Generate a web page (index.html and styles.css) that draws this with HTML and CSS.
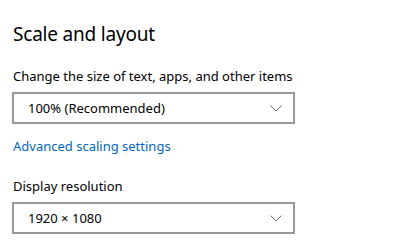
FILE: index.html
```html
<!DOCTYPE html>
<html>
<head>
<meta charset="utf-8">
<link rel="stylesheet" href="styles.css">
</head>
<body>
<main class="page">
  <h1 class="title">Scale and layout</h1>
  <div class="label label-first">Change the size of text, apps, and other items</div>
  <div class="select">
    <span class="select-text">100% (Recommended)</span>
    <svg class="chevron" width="12" height="7" viewBox="0 0 12 7"><path d="M0.5 0.5 L6 6 L11.5 0.5" fill="none" stroke="#6b6b6b" stroke-width="1"/></svg>
  </div>
  <a class="link" href="#">Advanced scaling settings</a>
  <div class="label label-second">Display resolution</div>
  <div class="select">
    <span class="select-text">1920 × 1080</span>
    <svg class="chevron" width="12" height="7" viewBox="0 0 12 7"><path d="M0.5 0.5 L6 6 L11.5 0.5" fill="none" stroke="#6b6b6b" stroke-width="1"/></svg>
  </div>
</main>
</body>
</html>
```
FILE: styles.css
```css
html, body {
  margin: 0;
  padding: 0;
  background: #ffffff;
}
body {
  font-family: "Noto Sans", "Open Sans", sans-serif;
  color: #000000;
  width: 399px;
  height: 242px;
  overflow: hidden;
}
.page {
  display: flex;
  flex-direction: column;
  align-items: flex-start;
  padding: 21px 0 0 12px;
}
.title {
  margin: 0 0 0 1px;
  font-size: 19px;
  line-height: 26px;
  font-weight: 400;
  letter-spacing: -0.2px;
}
.label {
  font-size: 13px;
  line-height: 20px;
  margin-left: 1px;
}
.label-first { margin-top: 19px; }
.label-second { margin-top: 20px; }
.select {
  box-sizing: border-box;
  width: 283px;
  height: 32px;
  margin-top: 6px;
  border: 2px solid #999999;
  display: flex;
  align-items: center;
  justify-content: space-between;
  padding: 0 11px 0 14px;
}
.select-text {
  font-size: 13px;
  line-height: 20px;
}
.chevron { display: block; }
.link {
  margin-top: 12px;
  margin-left: 1px;
  font-size: 13px;
  line-height: 20px;
  color: #0067c0;
  text-decoration: none;
}
```
